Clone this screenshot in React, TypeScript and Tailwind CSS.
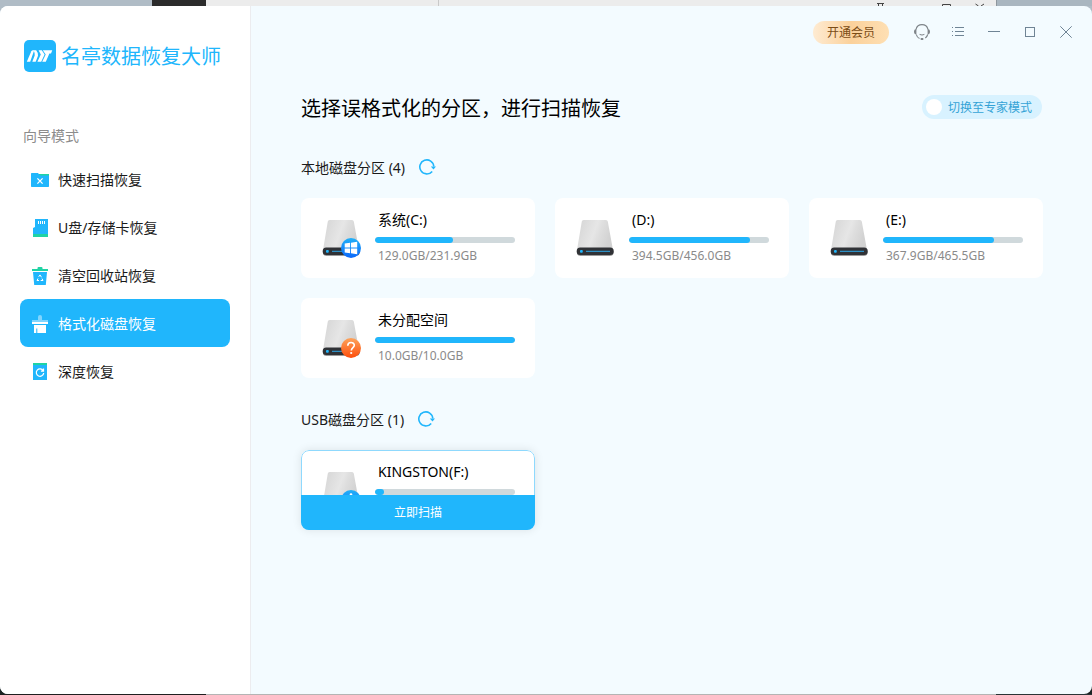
import { useState } from "react";
import type { ReactNode } from "react";
import clsx from "clsx";

type Badge = "windows" | "unknown" | "usb";

interface Partition {
  name: string;
  used: number;
  total: number;
  badge?: Badge;
}

const localPartitions: Partition[] = [
  { name: "系统(C:)", used: 129.0, total: 231.9, badge: "windows" },
  { name: "(D:)", used: 394.5, total: 456.0 },
  { name: "(E:)", used: 367.9, total: 465.5 },
  { name: "未分配空间", used: 10.0, total: 10.0, badge: "unknown" },
];

const usbPartitions: Partition[] = [
  { name: "KINGSTON(F:)", used: 1.8, total: 28.8, badge: "usb" },
];

function Logo() {
  return (
    <svg width="32" height="32" viewBox="0 0 32 32" aria-hidden="true">
      <rect width="32" height="32" rx="5" fill="#20b6fc" />
      <path d="M2.800 21.800 7.300 11.200Q7.800 10.200 9 10.200h1.200L6.200 21.800z" fill="#fff" />
      <path d="M9.600 10.200h2.600q2.400 3 1.800 5.600l-2.300 6H8.300l2.400-6.300q.5-2-1.100-5.300z" fill="#fff" />
      <path d="M14.600 10.200h3.200l2.800 4.400-3.400 7.200h-3.800l3.400-7.200z" fill="#fff" />
      <path d="M18.800 10.200h9.500l-1.300 3.200h-1.600l-3.600 8.400h-3.600l3.500-7.400z" fill="#fff" />
    </svg>
  );
}

function FolderIcon() {
  return (
    <svg width="20" height="20" viewBox="0 0 20 20" aria-hidden="true">
      <path d="M8 4h11v5H8z" fill="#1fd3a4" />
      <path d="M1.600 3H8l2 2.400h9v10.900a.7.7 0 0 1-.7.7H1.700a.7.7 0 0 1-.7-.7V3.600z" fill="#20b6fc" />
      <path d="m7.400 8.400 5.200 5.200m0-5.200-5.200 5.200" stroke="#fff" strokeWidth="1.300" />
    </svg>
  );
}

function CardIcon() {
  return (
    <svg width="20" height="20" viewBox="0 0 20 20" aria-hidden="true">
      <path d="M5 1h13v15H3v-6l2-1z" fill="#20b6fc" />
      <path d="M3 16h15v3H3z" fill="#1fd3a4" />
      <path d="M8.500 3v3m2-3v3m2-3v3m2-3v3" stroke="#fff" />
    </svg>
  );
}

function TrashIcon() {
  return (
    <svg width="20" height="20" viewBox="0 0 20 20" aria-hidden="true">
      <path d="M2 3h5.500V2a1 1 0 0 1 1-1h3a1 1 0 0 1 1 1v1H18v2H2z" fill="#1fd3a4" />
      <path d="M3 6h14l-1.200 13H4.200z" fill="#20b6fc" />
      <path d="m8.700 10.800 1.300-1.900 1.500 2.400M12 12.600l1 1.900h-2.300M9 14.500H7l1-2" stroke="#fff" fill="none" />
    </svg>
  );
}

function FormatIcon() {
  return (
    <svg width="20" height="20" viewBox="0 0 20 20" aria-hidden="true">
      <path d="M8 6V3a2 2 0 0 1 4 0v3h6v2H2V6z" fill="#80d5fe" />
      <path d="M2 8h16v2H2zM4 11h12v8H7.300v-4.500H6.300V19H4z" fill="#fff" />
    </svg>
  );
}

function DeepIcon() {
  return (
    <svg width="20" height="20" viewBox="0 0 20 20" aria-hidden="true">
      <path d="M3 1h14v2H3z" fill="#1fd3a4" />
      <path d="M3 3h14v15H3z" fill="#20b6fc" />
      <path d="M13.200 8.700A3.700 3.700 0 1 0 13.700 11M13.500 6.600v2.600h-2.600" stroke="#fff" strokeWidth="1.200" fill="none" />
    </svg>
  );
}

const navItems: { label: string; icon: ReactNode }[] = [
  { label: "快速扫描恢复", icon: <FolderIcon /> },
  { label: "U盘/存储卡恢复", icon: <CardIcon /> },
  { label: "清空回收站恢复", icon: <TrashIcon /> },
  { label: "格式化磁盘恢复", icon: <FormatIcon /> },
  { label: "深度恢复", icon: <DeepIcon /> },
];

function DriveIcon({ badge }: { badge?: Badge }) {
  return (
    <svg width="40" height="40" viewBox="0 0 40 40" className="shrink-0" aria-hidden="true">
      <defs>
        <linearGradient id="driveBody" x1="0" y1="0" x2="1" y2="0.3">
          <stop offset="0" stopColor="#d4d4d4" />
          <stop offset="0.55" stopColor="#e6e6e6" />
          <stop offset="0.7" stopColor="#dedede" />
          <stop offset="1" stopColor="#d2d2d2" />
        </linearGradient>
        <linearGradient id="badgeBlue" x1="0" y1="0" x2="0" y2="1">
          <stop offset="0" stopColor="#22b1f8" />
          <stop offset="1" stopColor="#0b68fb" />
        </linearGradient>
        <linearGradient id="badgeOrange" x1="0" y1="0" x2="0" y2="1">
          <stop offset="0" stopColor="#fda35b" />
          <stop offset="1" stopColor="#fd4d0b" />
        </linearGradient>
      </defs>
      <path d="M7.500 1h22.500q1.500 0 1.800 1.500L37 31H1L5.800 2.500Q6 1 7.500 1z" fill="url(#driveBody)" />
      <rect x="1" y="30" width="36.500" height="7" rx="3.500" fill="#9b9b9b" />
      <rect x="0.700" y="28.600" width="37" height="7.400" rx="3.500" fill="#303236" />
      <rect x="4" y="31" width="2.800" height="2.800" rx="1" fill="#20b6fc" />
      <path d="M10 32.400h24" stroke="#2d8fc4" strokeWidth="1.200" />
      {badge && (
        <circle cx="29" cy="29" r="10" fill={badge === "unknown" ? "url(#badgeOrange)" : "url(#badgeBlue)"} />
      )}
      {badge === "windows" && (
        <path d="m22.700 24.600 5.400-.8v4.700h-5.400zM29 23.700l6.200-.9v5.700H29zM22.700 29.500h5.400v4.700l-5.400-.8zM29 29.500h6.200v5.700l-6.200-.9z" fill="#fff" />
      )}
      {badge === "unknown" && (
        <>
          <path d="M25.800 26.700c0-4.200 6.500-4 6.500-.4 0 2.300-3 2.400-3 5.200" stroke="#fff" strokeWidth="1.600" fill="none" />
          <circle cx="29.200" cy="34" r="1.100" fill="#fff" />
        </>
      )}
      {badge === "usb" && (
        <>
          <path d="M29 23v11m-4-7v3l4 2m4-5v3l-4 2" stroke="#fff" strokeWidth="1.300" fill="none" />
          <circle cx="29" cy="23.500" r="1.300" fill="#fff" />
        </>
      )}
    </svg>
  );
}

function PartitionCard({ partition, active }: { partition: Partition; active?: boolean }) {
  const { name, used, total, badge } = partition;
  const percent = (used / total) * 100;
  return (
    <div
      className={clsx(
        "relative flex h-20 overflow-hidden rounded-lg bg-white",
        active && "shadow-[0_0_10px_rgba(0,0,0,0.1)]"
      )}
    >
      <div className="pl-[21px] pt-[21px]">
        <DriveIcon badge={badge} />
      </div>
      <div className="ml-[13px] w-[140px] pt-3">
        <p className="pl-[3px] text-sm leading-5 text-black">{name}</p>
        <div
          role="progressbar"
          aria-label={name}
          aria-valuenow={Math.round(percent)}
          className="mt-[7px] h-1.5 overflow-hidden rounded-full bg-[#d0d9dc]"
        >
          <div className="h-full rounded-full bg-[#20b6fc]" style={{ width: `${percent}%` }} />
        </div>
        {!active && (
          <p className="mt-[5px] pl-[3px] text-xs leading-4 text-[#8a8a8a]">
            {used.toFixed(1)}GB/{total.toFixed(1)}GB
          </p>
        )}
      </div>
      {active && (
        <>
          <div className="pointer-events-none absolute inset-0 rounded-lg border border-[#8fd9fd]" />
          <button className="absolute inset-x-0 bottom-0 h-[35px] bg-[#20b6fc] text-xs text-white">
            立即扫描
          </button>
        </>
      )}
    </div>
  );
}

function PartitionSection({ title, partitions, activeName }: { title: string; partitions: Partition[]; activeName?: string }) {
  return (
    <section>
      <div className="flex h-6 items-center gap-[13px]">
        <h2 className="text-sm leading-5 text-[#1a1a1a]">
          {title} ({partitions.length})
        </h2>
        <button aria-label="刷新">
          <svg width="18" height="18" viewBox="0 0 18 18" aria-hidden="true">
            <path d="M14.200 12.400A7 7 0 1 1 15.800 7.500" stroke="#20b6fc" strokeWidth="1.600" fill="none" />
            <path d="M12.800 7.500h5.200l-2.500 3z" fill="#20b6fc" />
          </svg>
        </button>
      </div>
      <div className="mt-[18px] grid grid-cols-[repeat(auto-fill,234px)] gap-5">
        {partitions.map((item) => (
          <PartitionCard key={item.name} partition={item} active={item.name === activeName} />
        ))}
      </div>
    </section>
  );
}

function Sidebar({ current, onSelect }: { current: number; onSelect: (index: number) => void }) {
  return (
    <aside className="w-[251px] shrink-0 border-r border-[#ececef] bg-white pt-[34px]">
      <div className="flex h-8 items-center gap-[5px] pl-6">
        <Logo />
        <span className="whitespace-nowrap pt-0.5 text-xl leading-8 text-[#20b6fc]">名亭数据恢复大师</span>
      </div>
      <p className="mt-[54px] pl-[23px] text-sm leading-5 text-[#8c8c8c]">向导模式</p>
      <nav className="mt-[9px] px-5">
        {navItems.map((item, index) => (
          <button
            key={item.label}
            onClick={() => onSelect(index)}
            className={clsx(
              "flex h-12 w-full items-center gap-2 rounded-lg pl-2.5 pt-0.5 text-sm",
              index === current ? "bg-[#20b6fc] text-white" : "text-[#1a1a1a]"
            )}
          >
            {item.icon}
            <span>{item.label}</span>
          </button>
        ))}
      </nav>
    </aside>
  );
}

function TitleBar() {
  return (
    <header className="flex h-[52px] items-center justify-end pr-2">
      <button className="mr-[15px] h-[23px] w-[76px] rounded-full bg-linear-to-r from-[#feebd2] via-[#fbd19b] to-[#fedfb3] pt-0.5 text-xs text-[#7a4c16]">
        开通会员
      </button>
      <button aria-label="客服" className="flex w-9 justify-center">
        <svg width="18" height="18" viewBox="0 0 18 18" fill="none" aria-hidden="true">
          <path d="M3 6.300a6.200 6.200 0 0 1 12 0M3.300 11.500q.6 2.700 3.200 4M14.700 11.500q-.6 2.300-2.400 3.500" stroke="#7e8489" strokeWidth="1.100" />
          <path d="M3.400 6v5.500C1.800 11.500 1 10.400 1 8.800S1.800 6 3.400 6zM14.600 6v5.500c1.600 0 2.400-1.100 2.400-2.700S16.200 6 14.600 6z" fill="#7e8489" />
          <path d="M6.600 11.400q2.400 1.300 4.800 0" stroke="#7e8489" />
          <rect x="7.500" y="15" width="3" height="2" rx="1" fill="#7e8489" />
        </svg>
      </button>
      <button aria-label="菜单" className="flex w-9 justify-center">
        <svg width="14" height="14" viewBox="0 0 14 14" stroke="#6f8495" aria-hidden="true">
          <path d="M1 2.500h1M1 6.500h1M1 10.500h1M4 2.500h9M4 6.500h9M4 10.500h9" />
        </svg>
      </button>
      <button aria-label="最小化" className="flex w-9 justify-center">
        <svg width="12" height="12" viewBox="0 0 12 12" stroke="#6f8495" aria-hidden="true">
          <path d="M0 5.500h12" />
        </svg>
      </button>
      <button aria-label="最大化" className="flex w-9 justify-center">
        <svg width="10" height="10" viewBox="0 0 10 10" stroke="#6f8495" fill="none" aria-hidden="true">
          <rect x="0.500" y="0.500" width="9" height="9" />
        </svg>
      </button>
      <button aria-label="关闭" className="flex w-9 justify-center">
        <svg width="12" height="12" viewBox="0 0 12 12" stroke="#6f8495" aria-hidden="true">
          <path d="m.3.300 11.400 11.400m0-11.400L.3 11.700" />
        </svg>
      </button>
    </header>
  );
}

// edges of the windows behind the app window
function BackdropTop() {
  return (
    <div className="flex h-1.5 overflow-hidden" aria-hidden="true">
      <div className="w-[152px] bg-[#b0bcc6]" />
      <div className="w-[54px] bg-[#2b2b2b]" />
      <div className="w-[233px] border-r border-[#c9c9c9] bg-[#ececec]" />
      <div className="flex flex-1 justify-end bg-[#ececec] pr-2.5">
        <svg width="110" height="6" viewBox="0 0 110 6" stroke="#444" fill="none">
          <path d="M1 3.500h7M2.500 3.500v2.500M6.500 3.500v2.500M66.500 6V4.500h8V6M99.500 4l3 2M108 4l-3 2" />
        </svg>
      </div>
      <div className="w-24 border-l border-[#8e979e] bg-[#a9b6c0]" />
    </div>
  );
}

function BackdropBottom() {
  return (
    <div className="flex h-px" aria-hidden="true">
      <div className="w-[206px] bg-[#1f1f20]" />
      <div className="flex-1 bg-[#b4b4b4]" />
      <div className="w-24 bg-[#2a3436]" />
    </div>
  );
}

export default function App() {
  const [current, setCurrent] = useState(3);
  const [expert, setExpert] = useState(false);

  return (
    <div className="flex min-h-screen flex-col bg-linear-to-b from-[#b0bcc6] from-50% to-[#1c2424] to-50% font-['Noto_Sans','Noto_Sans_CJK_SC',sans-serif]">
      <BackdropTop />
      <div className="flex flex-1 overflow-hidden rounded-lg bg-[#f3fbff]">
        <Sidebar current={current} onSelect={setCurrent} />
        <div className="flex min-w-0 flex-1 flex-col">
          <TitleBar />
          <main className="pl-[50px] pr-[49px] pt-[37px]">
            <div className="flex h-6 items-center justify-between">
              <h1 className="pt-1 text-xl leading-6 text-black">选择误格式化的分区，进行扫描恢复</h1>
              <label className="mr-px flex h-6 cursor-pointer items-center gap-1.5 rounded-full bg-[#d8f2ff] pl-1 pr-2.5 text-xs text-[#35a3d6]">
                <input
                  type="checkbox"
                  checked={expert}
                  onChange={(e) => setExpert(e.target.checked)}
                  className="size-4 appearance-none rounded-full bg-white"
                />
                <span className="pt-0.5">切换至专家模式</span>
              </label>
            </div>
            <div className="mt-[37px] flex flex-col gap-[30px]">
              <PartitionSection title="本地磁盘分区" partitions={localPartitions} />
              <PartitionSection title="USB磁盘分区" partitions={usbPartitions} activeName="KINGSTON(F:)" />
            </div>
          </main>
        </div>
      </div>
      <BackdropBottom />
    </div>
  );
}
